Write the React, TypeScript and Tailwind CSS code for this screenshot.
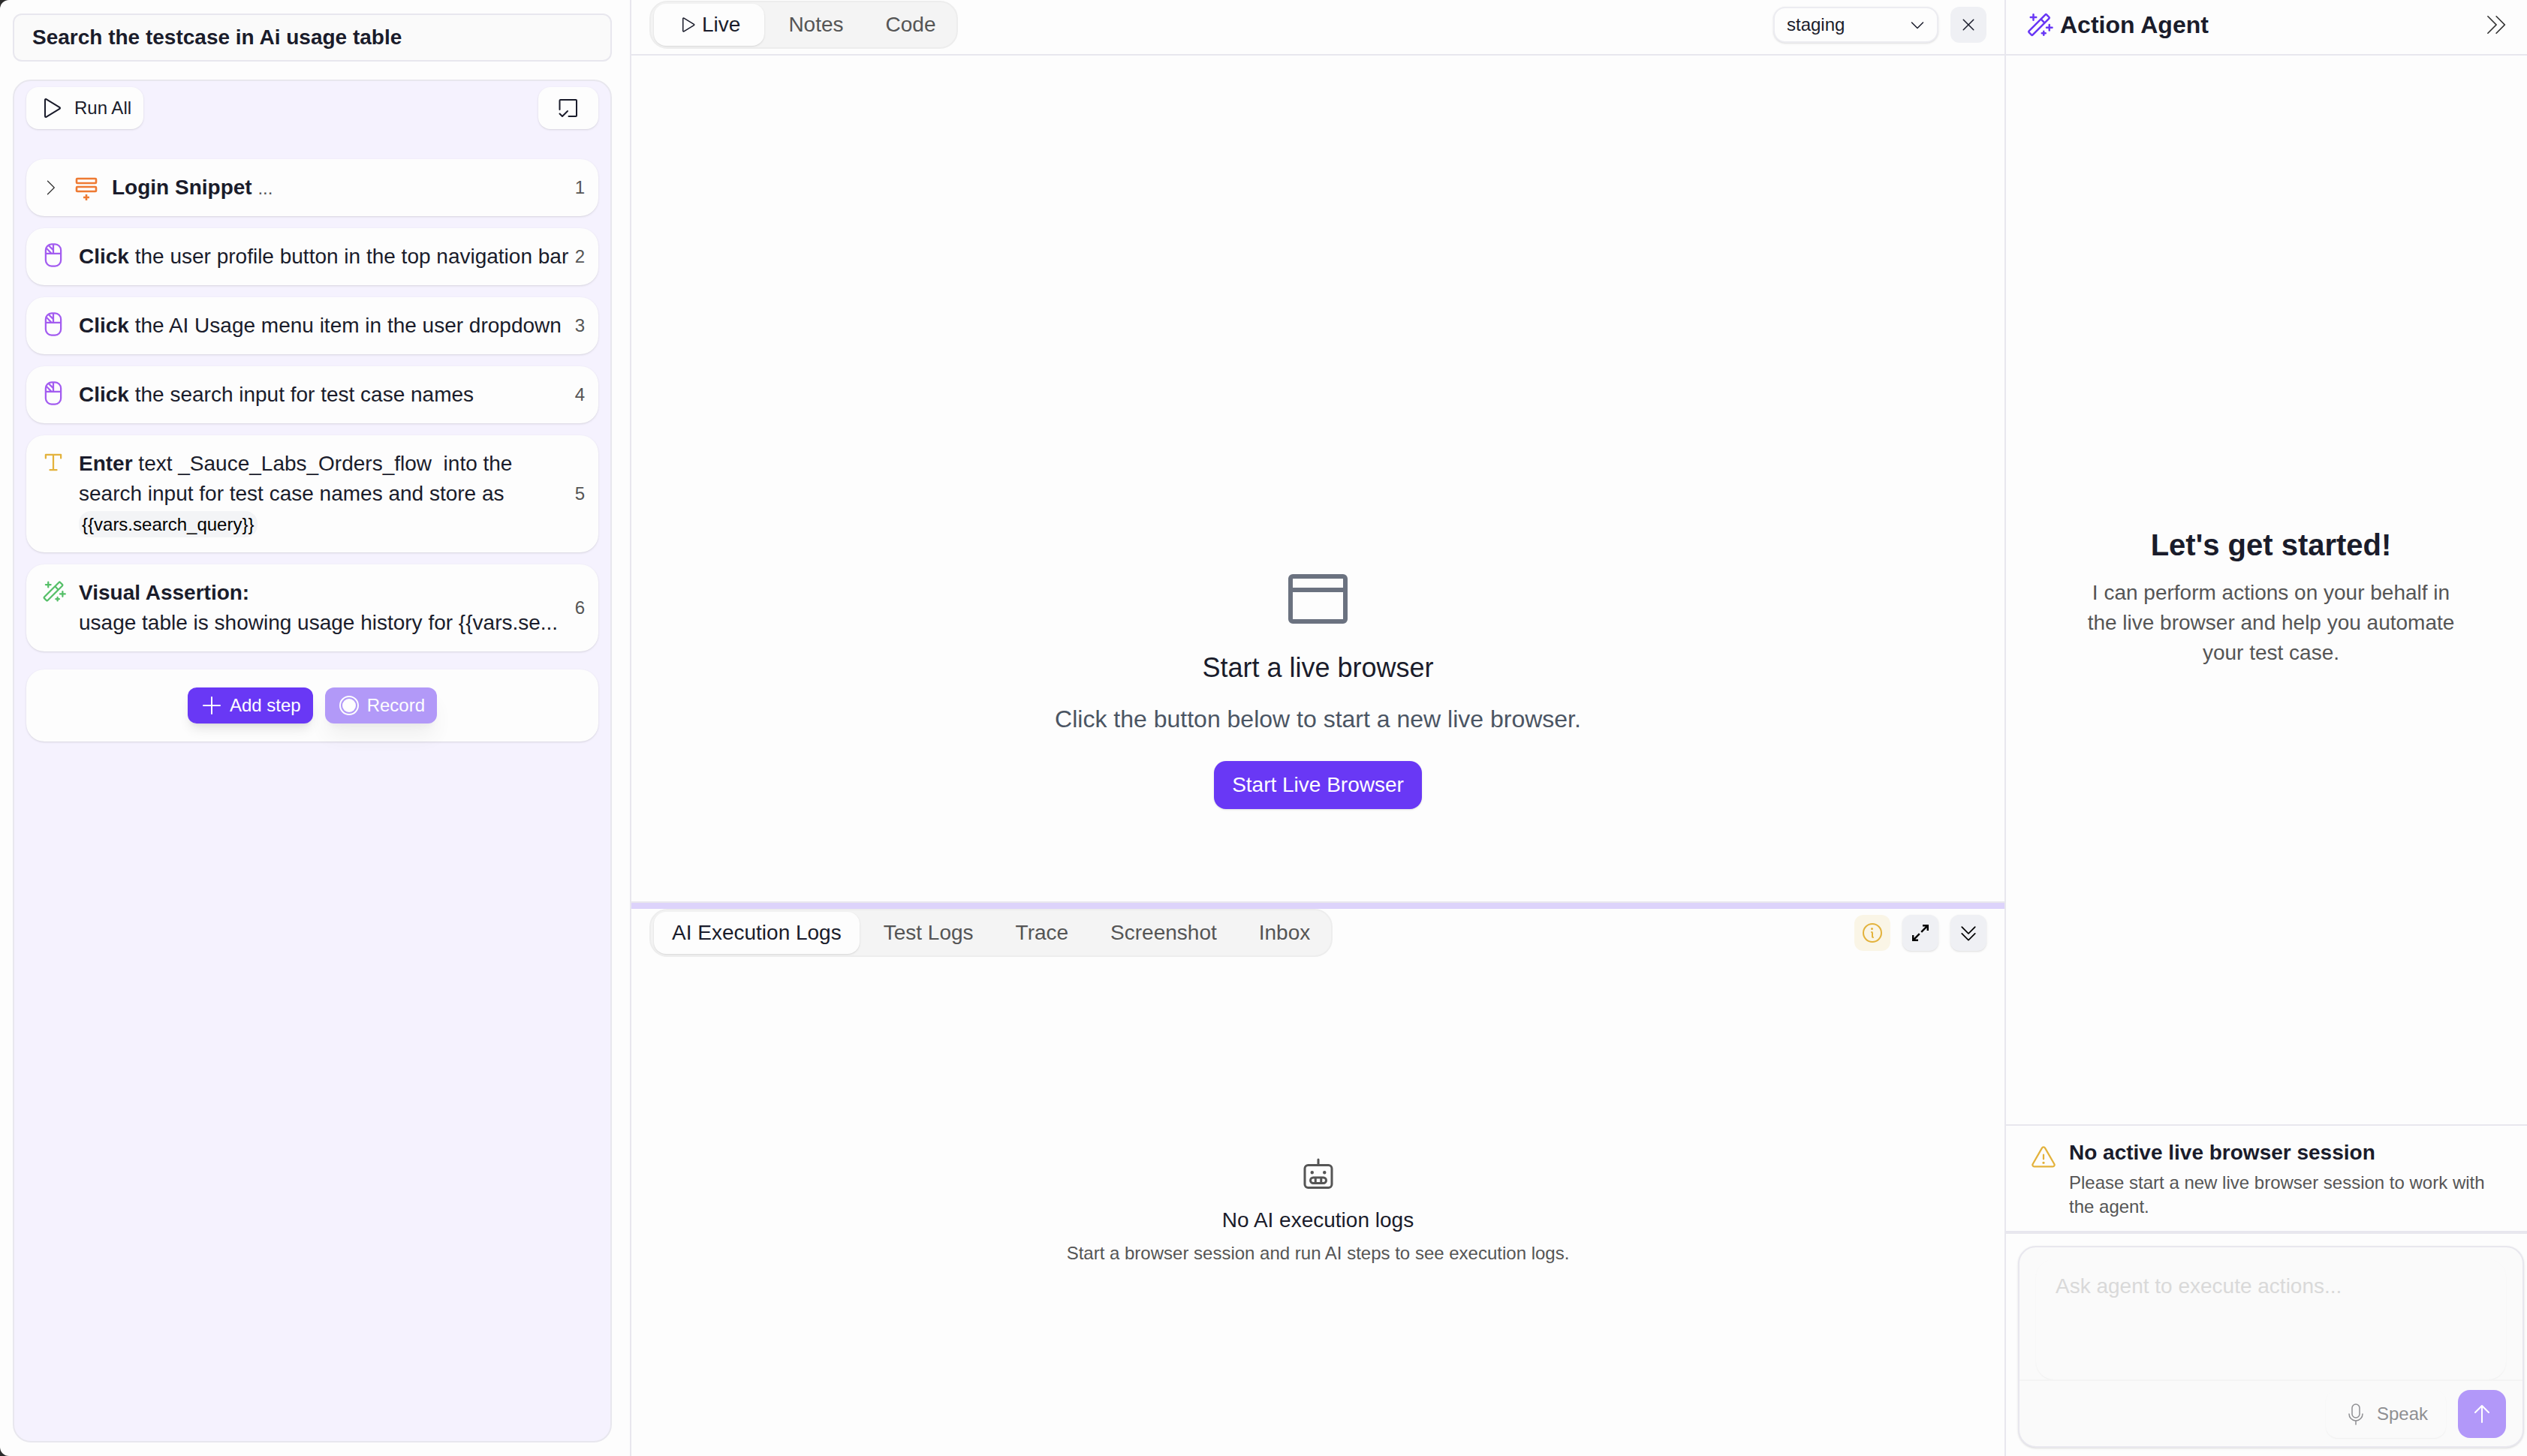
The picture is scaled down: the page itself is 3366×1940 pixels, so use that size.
import type { ReactNode } from "react";
import {
  PiArrowUp,
  PiCaretDoubleDown,
  PiCaretDoubleRightLight,
  PiCaretDown,
  PiCaretRightLight,
  PiInfo,
  PiMagicWand,
  PiMicrophoneLight,
  PiMouseLeftClick,
  PiPlay,
  PiPlus,
  PiRobot,
  PiTextT,
  PiWarning,
  PiX,
} from "react-icons/pi";

function SnippetIcon() {
  return (
    <svg viewBox="0 0 36 36" fill="none" stroke="currentColor" strokeWidth="2.6" className="size-9 text-[#ee7a33]">
      <rect x="5" y="6" width="26" height="6" rx="1" />
      <rect x="5" y="17" width="26" height="6" rx="1" />
      <path d="M18 27v8M14 31h8" />
    </svg>
  );
}

function SelectStepsIcon() {
  return (
    <svg viewBox="0 0 28 28" fill="none" stroke="currentColor" strokeWidth="2" strokeLinecap="round" strokeLinejoin="round" className="size-7">
      <path d="M2.5 16V4a1 1 0 0 1 1-1H24a1 1 0 0 1 1 1v20a1 1 0 0 1-1 1H14.5" />
      <path d="m2.5 21.5 3.5 3.5 7-7" />
    </svg>
  );
}

function WindowIcon() {
  return (
    <svg viewBox="0 0 96 96" fill="none" stroke="currentColor" strokeWidth="6" className="size-24 text-[#6b7280]">
      <rect x="11" y="18" width="73" height="60" rx="3" />
      <path d="M11 36h73" />
    </svg>
  );
}

function ExpandIcon() {
  return (
    <svg viewBox="0 0 24 24" fill="none" stroke="currentColor" strokeWidth="2.4" className="size-6">
      <path d="M15 2.2h6.8V9M21.8 2.2l-8.6 8.6M9 21.8H2.2V15M2.2 21.8l8.6-8.6" />
    </svg>
  );
}

function RecordIcon() {
  return (
    <svg viewBox="0 0 32 32" fill="none" stroke="currentColor" strokeWidth="2" className="size-8">
      <circle cx="16" cy="16" r="12" />
      <circle cx="16" cy="16" r="9" fill="currentColor" stroke="none" />
    </svg>
  );
}

type StepProps = { n: number; icon: ReactNode; children: ReactNode };

function Step({ n, icon, children }: StepProps) {
  return (
    <li className="flex min-h-[76px] items-center justify-between rounded-3xl bg-[#fdfdfd] p-[18px] shadow-sm">
      <div className="flex min-w-0 flex-1 items-start gap-4">
        <span className="shrink-0">{icon}</span>
        <div className="min-w-0 flex-1 leading-10">{children}</div>
      </div>
      <span className="shrink-0 pl-1 text-2xl leading-8 text-[#555]">{n}</span>
    </li>
  );
}

type Tab = { label: string; icon?: ReactNode };

function Tabs({ tabs }: { tabs: Tab[] }) {
  return (
    <div role="tablist" className="flex h-16 gap-2 overflow-hidden rounded-3xl border-2 border-[#ededed] bg-[#f4f4f4] px-1 py-0.5">
      {tabs.map((tab, i) => (
        <button
          key={tab.label}
          role="tab"
          aria-selected={i === 0}
          className={
            "flex items-center gap-2 " +
            (tab.icon ? "px-8 " : "px-6 ") +
            (i === 0 ? "rounded-2xl bg-[#fdfdfd] text-[#1a1c2b] shadow-sm" : "text-[#555]")
          }
        >
          {tab.icon}
          {tab.label}
        </button>
      ))}
    </div>
  );
}

function StepsPanel() {
  return (
    <aside className="flex w-[841px] shrink-0 flex-col border-r-2 border-[#e8e7ee] pt-[18px] pr-6 pb-[18px] pl-[17px]">
      <input
        aria-label="Test case name"
        defaultValue="Search the testcase in Ai usage table"
        className="h-16 w-full shrink-0 rounded-xl border-2 border-[#e8e7ee] bg-[#fafafa] px-6 font-bold"
      />
      <section className="mt-6 flex-1 rounded-3xl border-2 border-[#e8e7ee] bg-[#f5f2fe] px-4 pt-2">
        <div className="flex justify-between">
          <button className="flex h-14 items-center gap-4 rounded-2xl bg-[#fdfdfd] px-4 text-2xl shadow-sm">
            <PiPlay className="size-8" />
            Run All
          </button>
          <button aria-label="Select steps" className="flex h-14 w-20 items-center justify-center rounded-2xl bg-[#fdfdfd] shadow-sm">
            <SelectStepsIcon />
          </button>
        </div>

        <ol className="mt-10 flex flex-col gap-4">
          <li className="flex h-[76px] items-center gap-4 rounded-3xl bg-[#fdfdfd] px-[18px] shadow-sm">
            <PiCaretRightLight className="size-7 text-[#333]" />
            <SnippetIcon />
            <p className="flex-1">
              <b>Login Snippet</b> <span className="text-2xl text-[#555]">...</span>
            </p>
            <span className="text-2xl text-[#555]">1</span>
          </li>
          <Step n={2} icon={<PiMouseLeftClick className="size-9 text-[#a35cf0]" />}>
            <b>Click</b> the user profile button in the top navigation bar
          </Step>
          <Step n={3} icon={<PiMouseLeftClick className="size-9 text-[#a35cf0]" />}>
            <b>Click</b> the AI Usage menu item in the user dropdown
          </Step>
          <Step n={4} icon={<PiMouseLeftClick className="size-9 text-[#a35cf0]" />}>
            <b>Click</b> the search input for test case names
          </Step>
          <Step n={5} icon={<PiTextT className="size-9 text-[#e3b23c]" />}>
            <b>Enter</b> text _Sauce_Labs_Orders_flow&nbsp; into the search input for test case names and store as{" "}
            <code className="rounded-2xl bg-[#f3f4f6] px-1 py-1 font-['Liberation_Sans',Arial,sans-serif] text-2xl leading-8 text-black">
              {"{{vars.search_query}}"}
            </code>
          </Step>
          <Step n={6} icon={<PiMagicWand className="size-9 text-[#55bf68]" />}>
            <b>Visual Assertion:</b>
            <p className="whitespace-nowrap">usage table is showing usage history for {"{{vars.se..."}</p>
          </Step>
        </ol>

        <div className="mt-6 flex h-24 items-center justify-center gap-4 rounded-3xl bg-[#fdfdfd] text-2xl text-white shadow-sm">
          <button className="flex h-12 items-center gap-2 rounded-xl bg-[#6938f5] px-4 shadow-lg">
            <PiPlus className="size-8" />
            Add step
          </button>
          <button disabled className="flex h-12 items-center gap-2 rounded-xl bg-[#6938f5] px-4 opacity-50 shadow-xl">
            <RecordIcon />
            Record
          </button>
        </div>
      </section>
    </aside>
  );
}

function LivePanel() {
  return (
    <section className="flex min-h-0 flex-[1202] flex-col border-b-2 border-[#e8e7ee]">
      <header className="flex h-[74px] shrink-0 items-center justify-between border-b-2 border-[#e8e7ee] px-6 pb-1.5">
        <Tabs tabs={[{ label: "Live", icon: <PiPlay className="size-6" /> }, { label: "Notes" }, { label: "Code" }]} />
        <div className="flex gap-4">
          <div className="relative">
            <select
              aria-label="Environment"
              className="h-12 w-[220px] appearance-none rounded-2xl border-2 border-[#ececf1] bg-[#fdfdfd] px-4 text-2xl leading-8 shadow-sm"
            >
              <option>staging</option>
            </select>
            <PiCaretDown className="pointer-events-none absolute top-3 right-4 size-6" />
          </div>
          <button aria-label="Close" className="flex size-12 items-center justify-center rounded-xl bg-[#eff0f4]">
            <PiX className="size-6" />
          </button>
        </div>
      </header>
      <div className="flex flex-1 flex-col items-center justify-end pb-[123px]">
        <WindowIcon />
        <h2 className="mt-5 text-4xl leading-12">Start a live browser</h2>
        <p className="mt-5 text-[32px] leading-12 text-[#4b5563]">Click the button below to start a new live browser.</p>
        <button className="mt-8 h-16 rounded-2xl bg-[#6938f5] px-6 text-white shadow-sm">Start Live Browser</button>
      </div>
    </section>
  );
}

function LogsPanel() {
  return (
    <section className="flex min-h-0 flex-[730] flex-col">
      <header className="flex items-center justify-between px-6">
        <Tabs
          tabs={[
            { label: "AI Execution Logs" },
            { label: "Test Logs" },
            { label: "Trace" },
            { label: "Screenshot" },
            { label: "Inbox" },
          ]}
        />
        <div className="flex gap-4 text-black">
          <button aria-label="Info" className="flex size-12 items-center justify-center rounded-xl bg-[#faf5e6] text-[#e3b23c]">
            <PiInfo className="size-8" />
          </button>
          <button aria-label="Expand" className="flex size-12 items-center justify-center rounded-xl bg-[#eff0f4] shadow-sm">
            <ExpandIcon />
          </button>
          <button aria-label="Collapse" className="flex size-12 items-center justify-center rounded-xl bg-[#eff0f4] shadow-sm">
            <PiCaretDoubleDown className="size-7" />
          </button>
        </div>
      </header>
      <div className="flex flex-1 flex-col items-center justify-center pt-3.5">
        <PiRobot className="size-12 text-[#555]" />
        <h3 className="mt-4 leading-10">No AI execution logs</h3>
        <p className="mt-2 text-2xl leading-8 text-[#555]">Start a browser session and run AI steps to see execution logs.</p>
      </div>
    </section>
  );
}

function AgentPanel() {
  return (
    <aside className="flex w-[696px] shrink-0 flex-col border-l-2 border-[#e8e7ee]">
      <header className="flex h-[74px] shrink-0 items-center gap-2 border-b-2 border-[#e8e7ee] px-6 pb-1.5">
        <PiMagicWand className="size-10 text-[#6938f5]" />
        <h1 className="flex-1 text-[32px] leading-10 font-bold">Action Agent</h1>
        <button aria-label="Hide agent" className="text-[#333]">
          <PiCaretDoubleRightLight className="size-9" />
        </button>
      </header>
      <div className="flex flex-1 flex-col items-center justify-center pt-5 pl-3 text-center">
        <h2 className="text-[40px] leading-12 font-bold">Let's get started!</h2>
        <p className="mt-5 w-[512px] leading-10 text-[#555]">
          I can perform actions on your behalf in the live browser and help you automate your test case.
        </p>
      </div>
      <div role="status" className="flex gap-4 border-t-2 border-b-4 border-[#e8e7ee] pt-5 pr-6 pb-4 pl-8">
        <PiWarning className="mt-1 size-9 shrink-0 text-[#e3b23c]" />
        <div>
          <h3 className="leading-8 font-bold">No active live browser session</h3>
          <p className="mt-2 text-2xl leading-8 text-[#555]">Please start a new live browser session to work with the agent.</p>
        </div>
      </div>
      <form className="mt-4 mr-1 mb-[11px] ml-4 rounded-3xl border-2 border-[#e8e7ee] bg-[#fafafa] pt-4 shadow-sm">
        <div className="px-[22px]">
          <textarea
            disabled
            aria-label="Message"
            placeholder="Ask agent to execute actions..."
            className="block h-40 w-full resize-none rounded-3xl px-[26px] pt-4 leading-10 shadow-xs placeholder:text-[#d9d9d9]"
          />
        </div>
        <div className="flex justify-end gap-4 border-t-2 border-[#f4f4f4] px-[22px] pt-3 pb-[11px]">
          <button type="button" disabled className="flex h-16 items-center gap-3 rounded-2xl px-6 text-2xl text-[#8f8f92] shadow-xs">
            <PiMicrophoneLight className="size-8" />
            Speak
          </button>
          <button aria-label="Send" disabled className="flex size-16 items-center justify-center rounded-2xl bg-[#b298f9] text-white">
            <PiArrowUp className="size-8" />
          </button>
        </div>
      </form>
    </aside>
  );
}

export default function App() {
  return (
    <div className="bg-[#2b2b2b]">
      <div className="flex h-screen min-h-[1200px] overflow-hidden rounded-l-xl bg-[#fdfdfd] font-['Liberation_Sans',Arial,sans-serif] text-[28px] text-[#1a1c2b]">
        <StepsPanel />
        <main className="flex min-w-0 flex-1 flex-col">
          <LivePanel />
          <div role="separator" className="h-2 shrink-0 bg-[#ddd3fb]" />
          <LogsPanel />
        </main>
        <AgentPanel />
      </div>
    </div>
  );
}
